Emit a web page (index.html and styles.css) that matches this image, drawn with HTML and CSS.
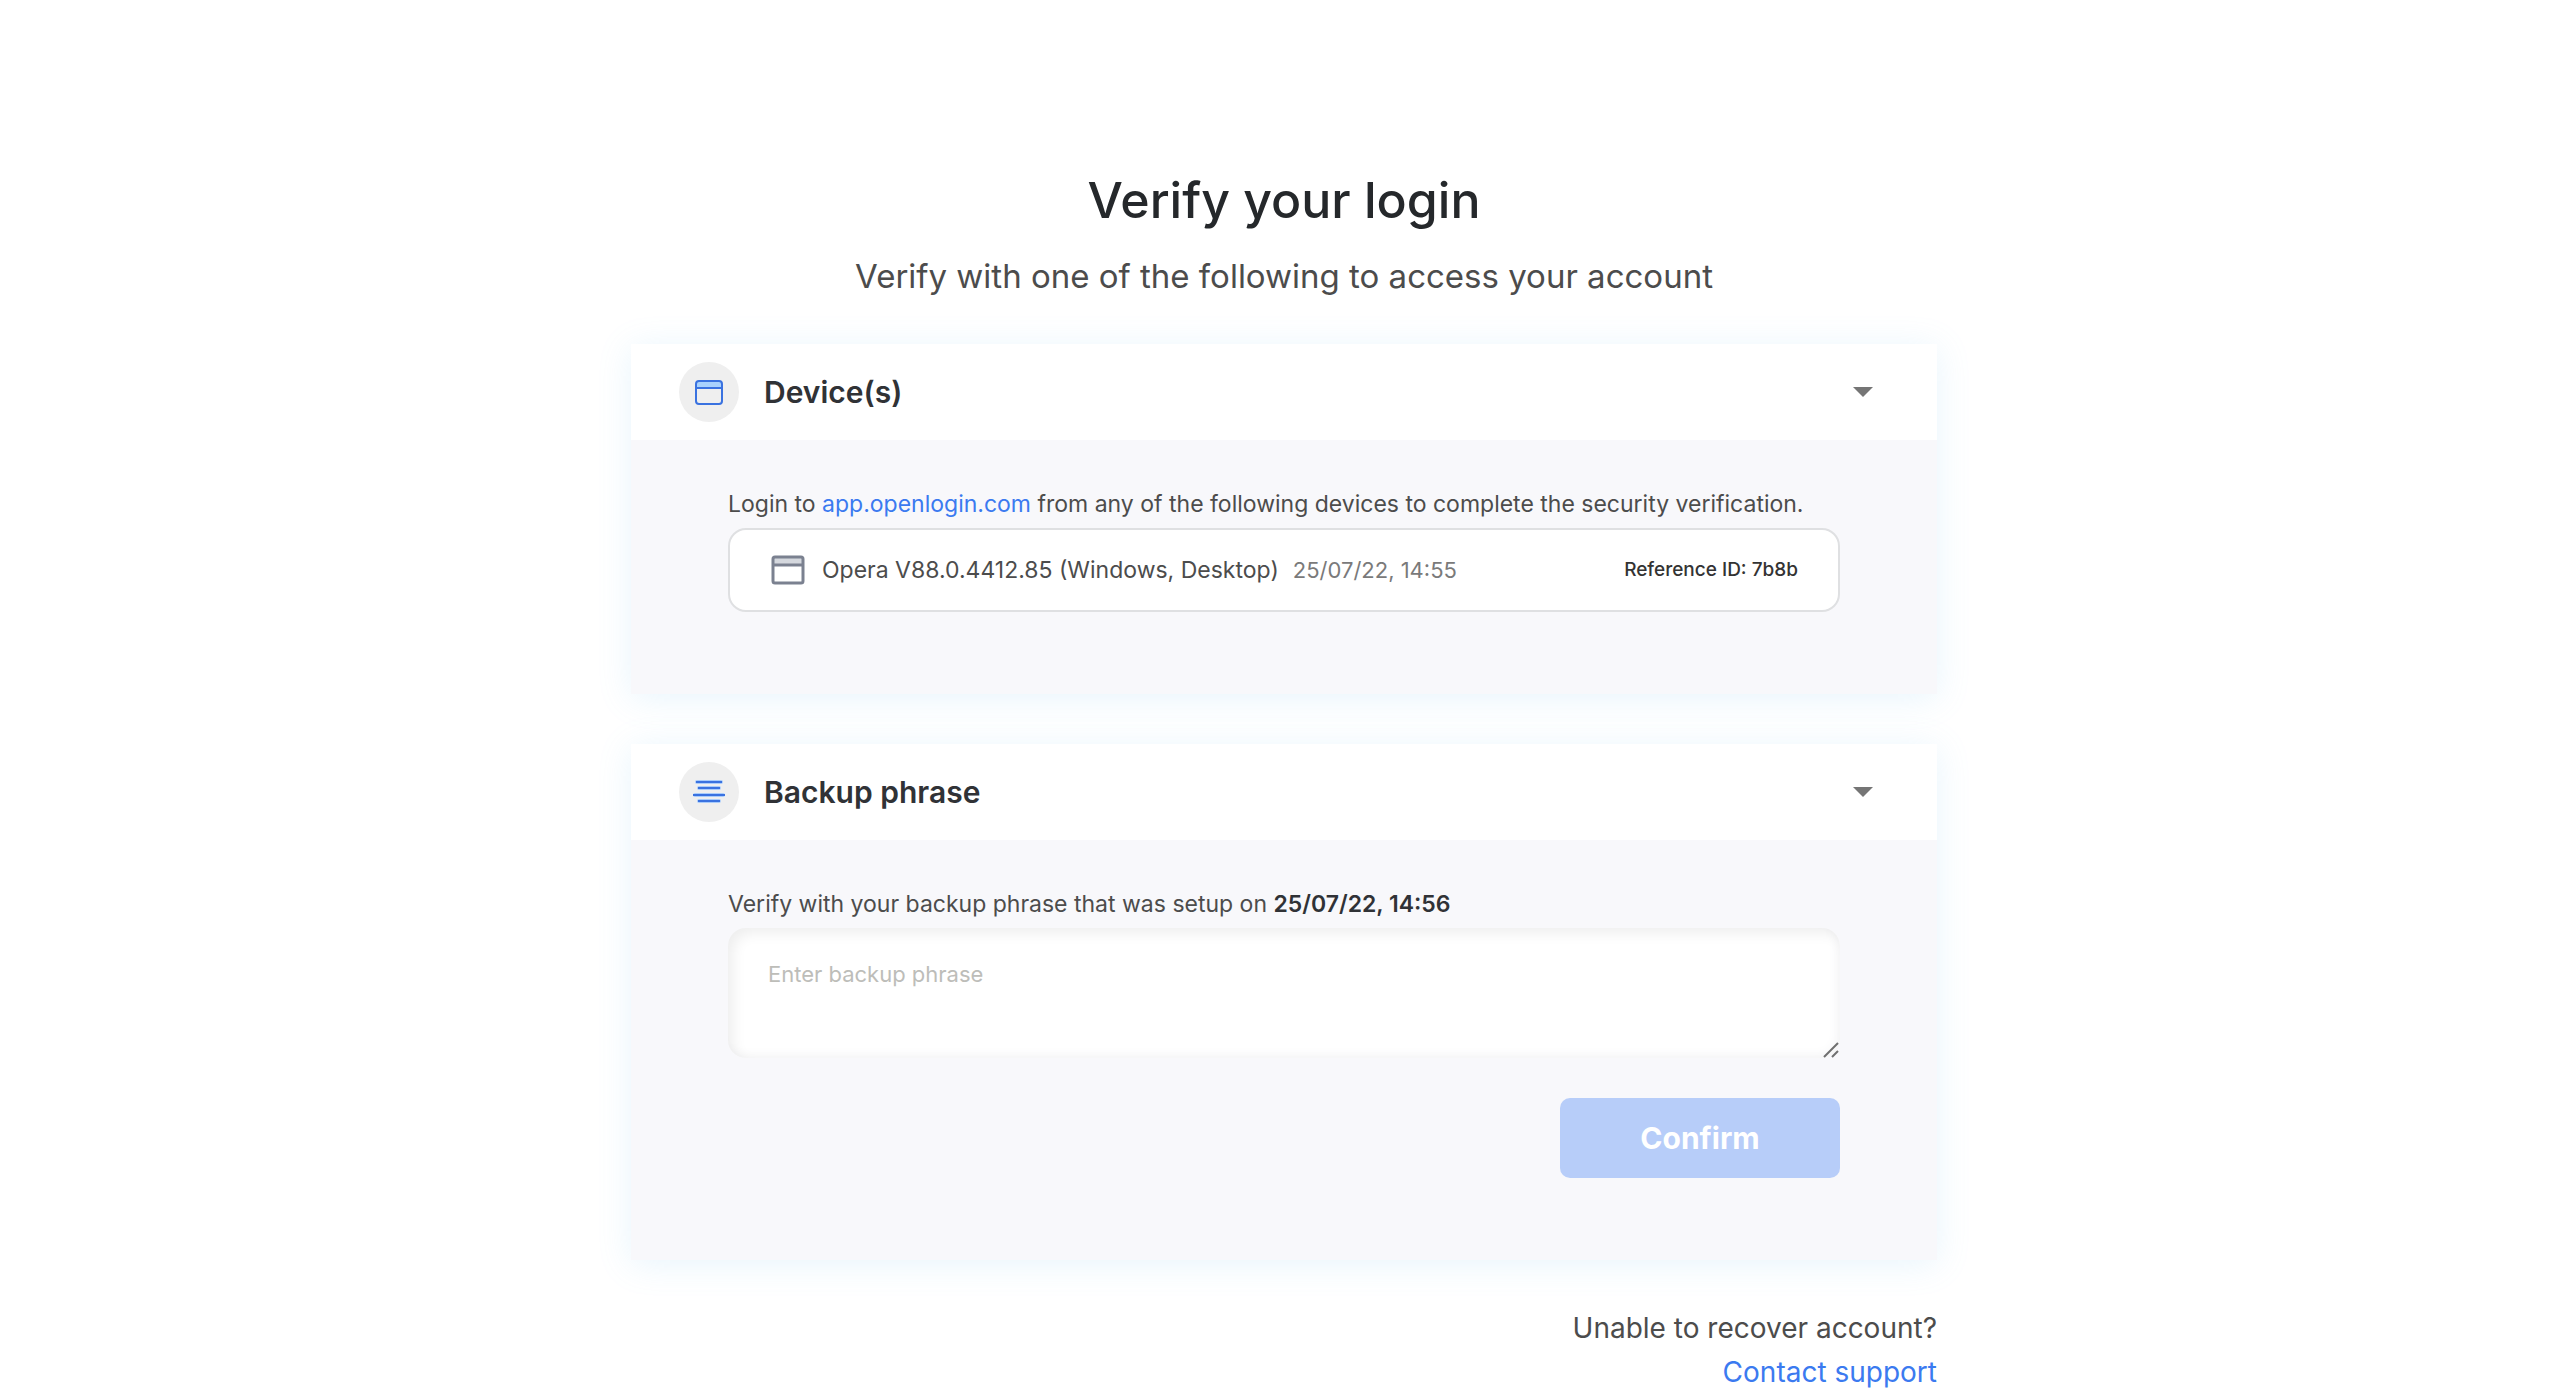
FILE: index.html
```html
<!DOCTYPE html>
<html lang="en">
<head>
  <meta charset="utf-8">
  <meta name="viewport" content="width=device-width, initial-scale=1">
  <title>Verify your login</title>
  <link rel="stylesheet" href="styles.css">
</head>
<body>
  <main class="page">
    <header class="intro">
      <h1 class="intro-title">Verify your login</h1>
      <p class="intro-text">Verify with one of the following to access your account</p>
    </header>

    <section class="card">
      <h2 class="card-heading">
        <button class="card-toggle" type="button" aria-expanded="true" aria-controls="devices">
          <span class="badge">
            <svg class="badge-icon" viewBox="0 0 30 30" aria-hidden="true">
              <rect x="2" y="4" width="26" height="7" rx="3" fill="#a9d2fd"/>
              <rect x="2" y="4" width="26" height="23" rx="3" fill="none" stroke="#3a72e0" stroke-width="2"/>
              <path d="M2 11h26" stroke="#3a72e0" stroke-width="2"/>
            </svg>
          </span>
          <span class="card-title">Device(s)</span>
          <svg class="caret" viewBox="0 0 20 10" aria-hidden="true"><path d="M0 0h20L10 10z" fill="#757575"/></svg>
        </button>
      </h2>
      <div class="card-body" id="devices">
        <p class="card-text">Login to <a class="link" href="#">app.openlogin.com</a> from any of the following devices to complete the security verification.</p>
        <div class="device">
          <svg class="device-icon" viewBox="0 0 36 30" aria-hidden="true">
            <path d="M3 3h30v6H3z" fill="#d5d8de"/>
            <rect x="3" y="2" width="30" height="26" rx="2" fill="none" stroke="#7b8190" stroke-width="3"/>
            <path d="M3 10h30" stroke="#7b8190" stroke-width="3"/>
          </svg>
          <span class="device-name">Opera V88.0.4412.85 (Windows, Desktop)</span>
          <time class="device-time">25/07/22, 14:55</time>
          <span class="device-ref">Reference ID: 7b8b</span>
        </div>
      </div>
    </section>

    <section class="card">
      <h2 class="card-heading">
        <button class="card-toggle" type="button" aria-expanded="true" aria-controls="backup">
          <span class="badge">
            <svg class="badge-icon" viewBox="0 0 32 30" aria-hidden="true">
              <path d="M4 5h24M6 11h20M2 18h28M6 24h20" stroke="#a9ccfb" stroke-width="4" stroke-linecap="round"/>
              <path d="M3 5h26M5 11h22M0 18h32M5 24h22" stroke="#3a72e0" stroke-width="2"/>
            </svg>
          </span>
          <span class="card-title">Backup phrase</span>
          <svg class="caret" viewBox="0 0 20 10" aria-hidden="true"><path d="M0 0h20L10 10z" fill="#757575"/></svg>
        </button>
      </h2>
      <form class="card-body" id="backup">
        <label class="card-text" for="phrase">Verify with your backup phrase that was setup on <strong class="setup-time">25/07/22, 14:56</strong></label>
        <div class="field">
          <textarea class="phrase" id="phrase" placeholder="Enter backup phrase"></textarea>
          <svg class="grip" viewBox="0 0 16 16" aria-hidden="true"><path d="M1 15L15 1M9 15l6-6" stroke="#707070" stroke-width="2"/></svg>
        </div>
        <button class="confirm" type="submit" disabled>Confirm</button>
      </form>
    </section>

    <footer class="help">
      <p class="help-text">Unable to recover account?</p>
      <a class="link" href="#">Contact support</a>
    </footer>
  </main>
</body>
</html>
```
FILE: styles.css
```css
* {
  box-sizing: border-box;
}

body {
  margin: 0;
  background: #fff;
  color: #4c4c4c;
  font-family: Inter, "Open Sans", sans-serif;
  font-size: 23px;
  line-height: 32px;
}

h1,
h2,
p {
  margin: 0;
}

.page {
  display: flex;
  flex-direction: column;
  gap: 50px;
  max-width: 1306px;
  margin: 0 auto;
  padding-top: 170px;
}

.link {
  color: #3b7af0;
  text-decoration: none;
}

.intro {
  display: flex;
  flex-direction: column;
  gap: 20px;
  text-align: center;
  margin-bottom: -8px;
}

.intro-title {
  color: #25282b;
  font-size: 50px;
  font-weight: 500;
  line-height: 60px;
}

.intro-text {
  font-size: 33px;
  line-height: 52px;
}

.card {
  background: #f8f8fb;
  box-shadow: 0 4px 32px rgba(110, 190, 240, 0.16);
}

.card-heading {
  font-size: 30px;
}

.card-toggle {
  display: flex;
  align-items: center;
  gap: 25px;
  width: 100%;
  padding: 18px 64px 18px 48px;
  border: 0;
  background: #fff;
  color: #303236;
  font: inherit;
  font-weight: 600;
}

.badge {
  display: flex;
  align-items: center;
  justify-content: center;
  width: 60px;
  height: 60px;
  border-radius: 50%;
  background: #efefef;
}

.badge-icon {
  width: 32px;
  height: 30px;
}

.caret {
  width: 20px;
  height: 10px;
  margin-left: auto;
}

.card-body {
  display: flex;
  flex-direction: column;
  gap: 8px;
  padding: 48px 97px 82px;
}

.device {
  display: flex;
  align-items: center;
  min-height: 84px;
  padding: 0 40px;
  border: 2px solid #dfe0e2;
  border-radius: 18px;
  background: #fff;
}

.device-icon {
  width: 36px;
  height: 30px;
  margin-right: 16px;
}

.device-time {
  margin-left: 14px;
  color: #7a7a7a;
  font-size: 22px;
}

.device-ref {
  margin-left: auto;
  color: #333;
  font-size: 19px;
  font-weight: 500;
}

.setup-time {
  color: #303236;
  font-weight: 600;
}

.field {
  display: flex;
  position: relative;
}

.phrase {
  width: 100%;
  height: 130px;
  padding: 30px 40px;
  border: 0;
  border-radius: 18px;
  background: #fff;
  box-shadow: inset 5px 5px 14px rgba(0, 0, 0, 0.07), inset -5px -5px 10px #f9f9fa;
  font: inherit;
  font-size: 22px;
  resize: none;
}

.phrase::placeholder {
  color: #bdbdb9;
}

.grip {
  position: absolute;
  right: 1px;
  bottom: 0;
  width: 16px;
  height: 16px;
}

.confirm {
  align-self: flex-end;
  width: 280px;
  height: 80px;
  margin-top: 32px;
  border: 0;
  border-radius: 10px;
  background: #b7cdf9;
  color: #fff;
  font: inherit;
  font-size: 30px;
  font-weight: 700;
}

.help {
  display: flex;
  flex-direction: column;
  align-items: flex-end;
  margin-top: -4px;
  font-size: 28px;
  line-height: 44px;
}
```
